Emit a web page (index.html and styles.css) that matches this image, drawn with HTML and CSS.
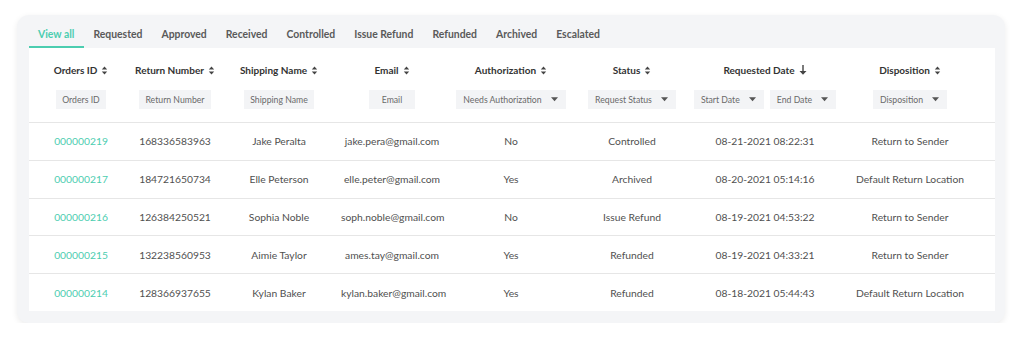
FILE: index.html
```html
<!DOCTYPE html>
<html lang="en">
  <head>
    <meta charset="UTF-8" />
    <title>Returns</title>
    <link rel="stylesheet" href="styles.css">
  </head>
  <body>
    <main class="card">
      <nav class="tabs">
        <a class="tab active">View all</a>
        <a class="tab">Requested</a>
        <a class="tab">Approved</a>
        <a class="tab">Received</a>
        <a class="tab">Controlled</a>
        <a class="tab">Issue Refund</a>
        <a class="tab">Refunded</a>
        <a class="tab">Archived</a>
        <a class="tab">Escalated</a>
      </nav>

      <section class="panel">
        <table class="returns">
          <colgroup>
            <col style="width:104px"><col style="width:84px"><col style="width:124px"><col style="width:102px">
            <col style="width:136px"><col style="width:106px"><col style="width:160px"><col style="width:150px">
          </colgroup>
          <thead>
            <tr>
              <th>
                <div class="label">Orders ID <svg class="sort" viewBox="0 0 7 10"><path d="M3.5 0.5 6.5 4H0.5zM3.5 9.5 0.5 6H6.5z"/></svg></div>
                <div class="filters"><span class="filter">Orders ID</span></div>
              </th>
              <th>
                <div class="label">Return Number <svg class="sort" viewBox="0 0 7 10"><path d="M3.5 0.5 6.5 4H0.5zM3.5 9.5 0.5 6H6.5z"/></svg></div>
                <div class="filters"><span class="filter">Return Number</span></div>
              </th>
              <th>
                <div class="label">Shipping Name <svg class="sort" viewBox="0 0 7 10"><path d="M3.5 0.5 6.5 4H0.5zM3.5 9.5 0.5 6H6.5z"/></svg></div>
                <div class="filters"><span class="filter">Shipping Name</span></div>
              </th>
              <th>
                <div class="label">Email <svg class="sort" viewBox="0 0 7 10"><path d="M3.5 0.5 6.5 4H0.5zM3.5 9.5 0.5 6H6.5z"/></svg></div>
                <div class="filters"><span class="filter wide">Email</span></div>
              </th>
              <th>
                <div class="label">Authorization <svg class="sort" viewBox="0 0 7 10"><path d="M3.5 0.5 6.5 4H0.5zM3.5 9.5 0.5 6H6.5z"/></svg></div>
                <div class="filters"><span class="filter select">Needs Authorization <svg class="caret" viewBox="0 0 8 5"><path d="M0 0H8L4 4.5z"/></svg></span></div>
              </th>
              <th>
                <div class="label">Status <svg class="sort" viewBox="0 0 7 10"><path d="M3.5 0.5 6.5 4H0.5zM3.5 9.5 0.5 6H6.5z"/></svg></div>
                <div class="filters"><span class="filter select">Request Status <svg class="caret" viewBox="0 0 8 5"><path d="M0 0H8L4 4.5z"/></svg></span></div>
              </th>
              <th>
                <div class="label">Requested Date <svg class="arrow" viewBox="0 0 8 10"><path d="M3.3 0H4.7V6H7.5L4 9.8 0.5 6H3.3z"/></svg></div>
                <div class="filters">
                  <span class="filter select">Start Date <svg class="caret" viewBox="0 0 8 5"><path d="M0 0H8L4 4.5z"/></svg></span>
                  <span class="filter select">End Date <svg class="caret" viewBox="0 0 8 5"><path d="M0 0H8L4 4.5z"/></svg></span>
                </div>
              </th>
              <th>
                <div class="label">Disposition <svg class="sort" viewBox="0 0 7 10"><path d="M3.5 0.5 6.5 4H0.5zM3.5 9.5 0.5 6H6.5z"/></svg></div>
                <div class="filters"><span class="filter select">Disposition <svg class="caret" viewBox="0 0 8 5"><path d="M0 0H8L4 4.5z"/></svg></span></div>
              </th>
            </tr>
          </thead>
          <tbody>
            <tr>
              <td class="order">000000219</td><td>168336583963</td><td>Jake Peralta</td><td>jake.pera@gmail.com</td>
              <td>No</td><td>Controlled</td><td>08-21-2021 08:22:31</td><td>Return to Sender</td>
            </tr>
            <tr>
              <td class="order">000000217</td><td>184721650734</td><td>Elle Peterson</td><td>elle.peter@gmail.com</td>
              <td>Yes</td><td>Archived</td><td>08-20-2021 05:14:16</td><td>Default Return Location</td>
            </tr>
            <tr>
              <td class="order">000000216</td><td>126384250521</td><td>Sophia Noble</td><td>soph.noble@gmail.com</td>
              <td>No</td><td>Issue Refund</td><td>08-19-2021 04:53:22</td><td>Return to Sender</td>
            </tr>
            <tr>
              <td class="order">000000215</td><td>132238560953</td><td>Aimie Taylor</td><td>ames.tay@gmail.com</td>
              <td>Yes</td><td>Refunded</td><td>08-19-2021 04:33:21</td><td>Return to Sender</td>
            </tr>
            <tr>
              <td class="order">000000214</td><td>128366937655</td><td>Kylan Baker</td><td>kylan.baker@gmail.com</td>
              <td>Yes</td><td>Refunded</td><td>08-18-2021 05:44:43</td><td>Default Return Location</td>
            </tr>
          </tbody>
        </table>
      </section>
    </main>
  </body>
</html>
```

FILE: styles.css
```css
* {
  box-sizing: border-box;
  margin: 0;
  padding: 0;
}

body {
  font-family: 'Lato', 'Noto Sans', sans-serif;
  background-color: #fff;
  color: #444;
  padding: 15px 19px 0 17px;
}

.card {
  background-color: #f4f5f7;
  border-radius: 12px;
  padding: 0 10px 12px 12px;
  box-shadow: 0 2px 6px rgba(0, 0, 0, 0.08);
}

/* tabs */
.tabs {
  display: flex;
  height: 33px;
  align-items: flex-end;
}

.tab {
  font-size: 10.4px;
  font-weight: 700;
  color: #5a5a5a;
  padding: 0 10px 6px 9px;
  border-bottom: 2px solid transparent;
  cursor: pointer;
}

.tab.active {
  color: #4ccdb0;
  border-bottom-color: #4ccdb0;
}

/* table */
.panel {
  background-color: #fff;
}

.returns {
  width: 100%;
  table-layout: fixed;
  border-collapse: collapse;
  font-size: 10.3px;
}

.returns th {
  padding: 15px 0 13px;
  font-weight: 400;
  vertical-align: top;
}

.returns th:last-child,
.returns td:last-child {
  padding-right: 20px;
}

.label {
  display: flex;
  justify-content: center;
  align-items: center;
  gap: 4px;
  font-size: 10px;
  font-weight: 700;
  color: #333;
  height: 14px;
  white-space: nowrap;
}

.sort {
  width: 7px;
  height: 9px;
  fill: #444;
}

.arrow {
  width: 8px;
  height: 10px;
  fill: #444;
}

.filters {
  display: flex;
  justify-content: center;
  gap: 6px;
  margin-top: 13px;
}

.filter {
  display: inline-flex;
  align-items: center;
  height: 19px;
  padding: 0 6px;
  background-color: #f3f4f6;
  color: #6a6a6a;
  font-size: 8.7px;
  white-space: nowrap;
}

.filter.wide {
  padding: 0 13px;
}

.filter.select {
  gap: 9px;
  padding: 0 8px 0 7px;
}

.caret {
  width: 7px;
  height: 5px;
  fill: #555;
}

.returns td {
  height: 37.75px;
  border-top: 1px solid #e6e6e6;
  text-align: center;
  white-space: nowrap;
  color: #505050;
}

.returns td.order {
  color: #4ccdb0;
}
```
